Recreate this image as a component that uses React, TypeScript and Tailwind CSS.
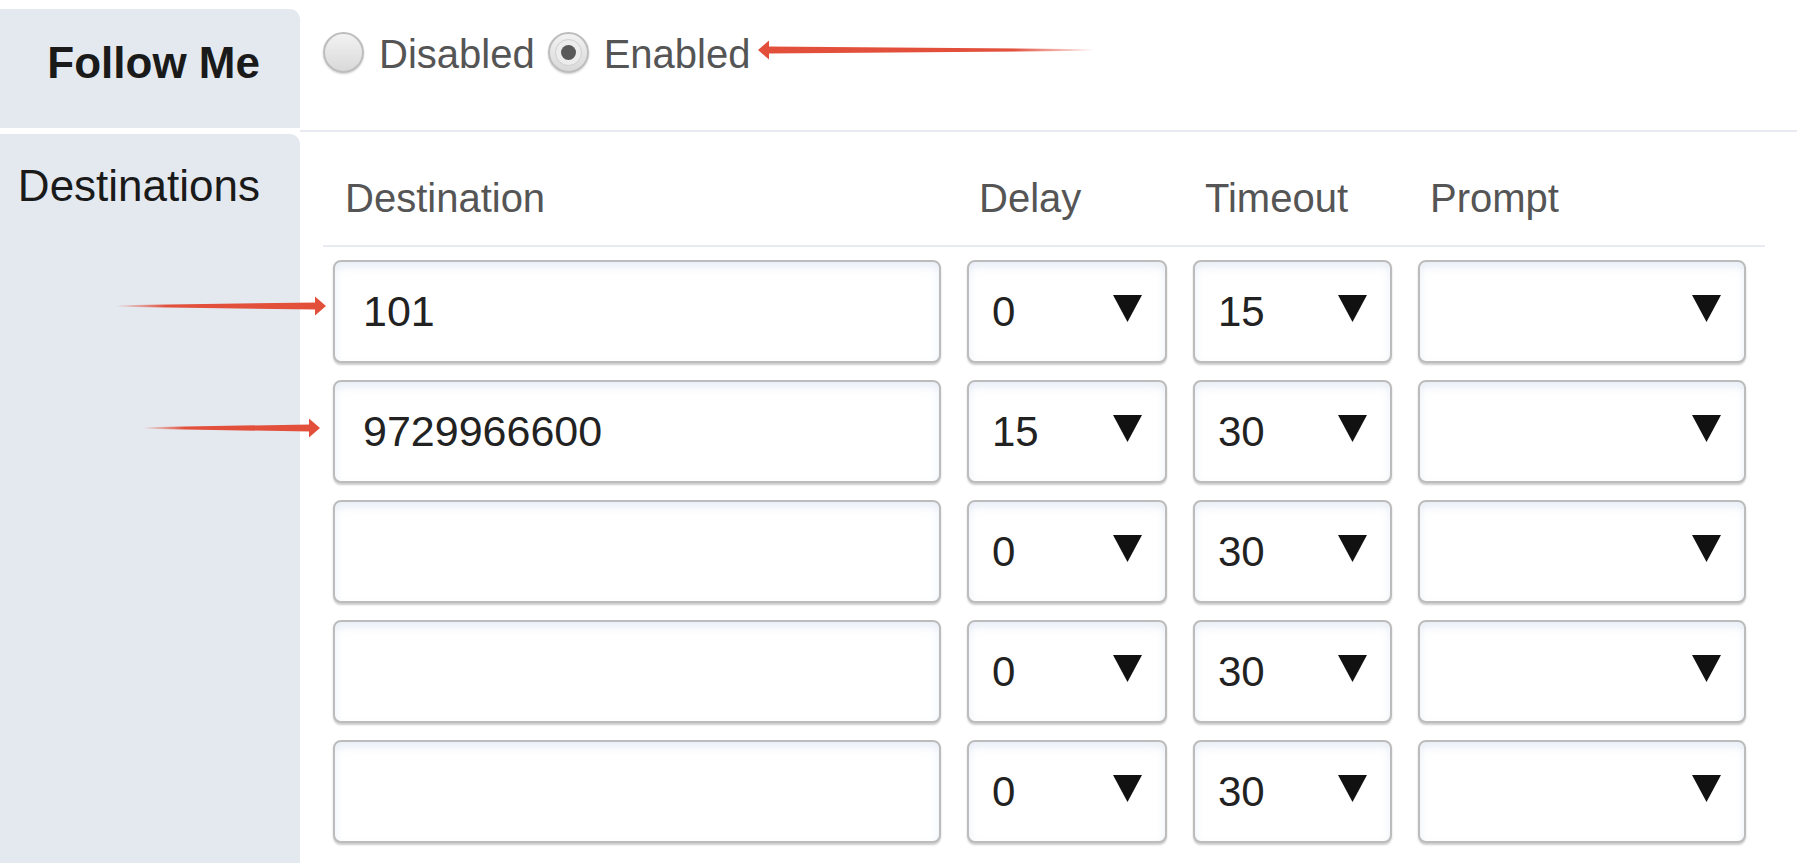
import React from 'react';

const rows = [
  { dest: '101', delay: '0', timeout: '15' },
  { dest: '9729966600', delay: '15', timeout: '30' },
  { dest: '', delay: '0', timeout: '30' },
  { dest: '', delay: '0', timeout: '30' },
  { dest: '', delay: '0', timeout: '30' },
];

const boxCls =
  'h-[103px] rounded-[8px] border-2 border-[#bcbcbc] bg-white shadow-[inset_0_5px_8px_rgba(214,224,240,0.55),0_2px_2px_rgba(0,0,0,0.2)] flex items-center';

function Caret() {
  return (
    <svg width="29" height="27" viewBox="0 0 29 27" className="shrink-0 -mt-[6px]">
      <polygon points="0,0 29,0 14.5,27" fill="#111" />
    </svg>
  );
}

function Select({ value }: { value: string }) {
  return (
    <div className={`${boxCls} justify-between pl-[23px] pr-[23px]`}>
      <span className="text-[42px] leading-[42px] text-[#222]">{value}</span>
      <Caret />
    </div>
  );
}

function Radio({ checked }: { checked?: boolean }) {
  return (
    <div className="h-[41px] w-[41px] rounded-full border-2 border-[#bdbdbd] bg-gradient-to-b from-[#f2f2f2] to-[#d9d9d9] shadow-[0_1px_2px_rgba(0,0,0,0.2)] flex items-center justify-center shrink-0">
      {checked && (
        <div className="h-[27px] w-[27px] rounded-full bg-[#ececec] border border-[#cfcfcf] flex items-center justify-center">
          <div className="h-[15px] w-[15px] rounded-full bg-[#595959]" />
        </div>
      )}
    </div>
  );
}

function Arrow({ tipX, y, tailX }: { tipX: number; y: number; tailX: number }) {
  // arrow pointing toward tipX
  const dir = tailX > tipX ? 1 : -1;
  const base = tipX + dir * 10;
  const id = `fade-${tipX}-${y}`;
  return (
    <g>
      <defs>
        <linearGradient id={id} x1={base} x2={tailX} y1={y} y2={y} gradientUnits="userSpaceOnUse">
          <stop offset="0" stopColor="#e2503c" />
          <stop offset="0.75" stopColor="#e2503c" />
          <stop offset="1" stopColor="#e2503c" stopOpacity="0" />
        </linearGradient>
      </defs>
      <polygon
        points={`${base},${y - 3.5} ${tailX},${y - 0.8} ${tailX},${y + 0.8} ${base},${y + 3.5}`}
        fill={`url(#${id})`}
      />
      <polygon points={`${tipX},${y} ${base + dir * 1},${y - 9.5} ${base + dir * 1},${y + 9.5}`} fill="#e2503c" />
    </g>
  );
}

export default function App() {
  return (
    <div className="relative h-[863px] w-full overflow-hidden bg-white font-['Liberation_Sans',Arial,sans-serif]">
      {/* Follow Me row */}
      <div className="flex h-[132px]">
        <div className="w-[300px] shrink-0 pt-[9px]">
          <div className="h-[119px] rounded-tr-[10px] bg-[#e4e9f0] pr-[40px] pt-[32px] text-right">
            <span className="text-[44px] leading-[44px] font-bold text-[#1a1a1a]">Follow Me</span>
          </div>
        </div>
        <div className="flex-1 border-b-2 border-[#e7ebf1] pl-[23px]">
          <div className="mt-[31px] flex h-[42px] items-center">
            <Radio />
            <span className="ml-[15px] mt-[4px] text-[40px] leading-[40px] text-[#555]">Disabled</span>
            <span className="ml-[13px]">
              <Radio checked />
            </span>
            <span className="ml-[15px] mt-[4px] text-[40px] leading-[40px] text-[#555]">Enabled</span>
          </div>
        </div>
      </div>

      {/* Destinations row */}
      <div className="flex h-[731px]">
        <div className="w-[300px] shrink-0 pt-[2px]">
          <div className="h-full rounded-tr-[10px] bg-[#e4e9f0] pr-[40px] pt-[30px] text-right">
            <span className="text-[44px] leading-[44px] text-[#1a1a1a]">Destinations</span>
          </div>
        </div>
        <div className="flex-1 pl-[23px] pr-[32px]">
          <div className="grid grid-cols-[608px_200px_199px_328px] gap-x-[26px] border-b-2 border-[#e7ebf1] pl-[10px] pt-[46px] pb-[27px]">
            {['Destination', 'Delay', 'Timeout', 'Prompt'].map((h) => (
              <div key={h} className="pl-[12px] text-[40px] leading-[40px] text-[#555]">
                {h}
              </div>
            ))}
          </div>
          <div className="mt-[13px] flex flex-col gap-[17px] pl-[10px]">
            {rows.map((r, i) => (
              <div key={i} className="grid grid-cols-[608px_200px_199px_328px] gap-x-[26px]">
                <div className={`${boxCls} pl-[28px]`}>
                  <span className="text-[43px] leading-[43px] text-[#222]">{r.dest}</span>
                </div>
                <Select value={r.delay} />
                <Select value={r.timeout} />
                <Select value="" />
              </div>
            ))}
          </div>
        </div>
      </div>

      {/* annotation arrows */}
      <svg className="pointer-events-none absolute inset-0" width="1797" height="863">
        <Arrow tipX={758} y={50} tailX={1095} />
        <Arrow tipX={326} y={306} tailX={116} />
        <Arrow tipX={320} y={428} tailX={143} />
      </svg>
    </div>
  );
}
